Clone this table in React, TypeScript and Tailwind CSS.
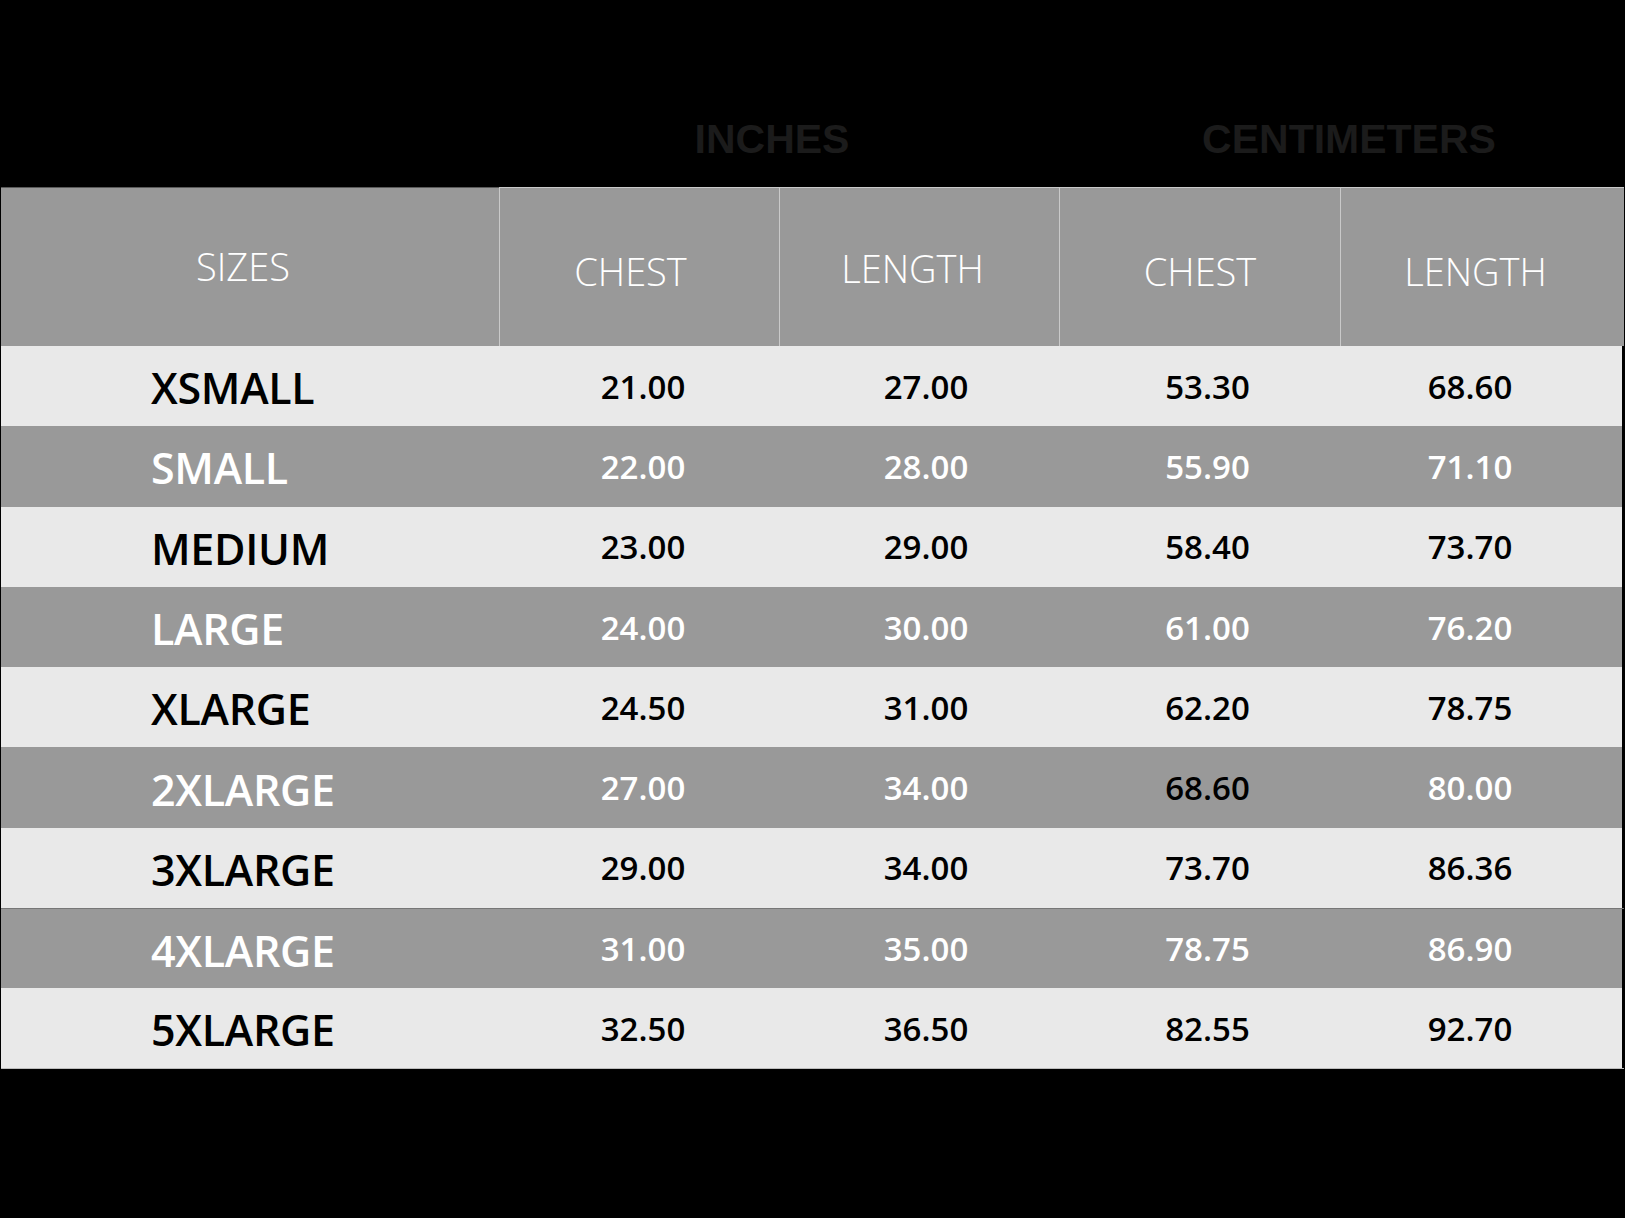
import React from "react";

const rows = [
  ["XSMALL", "21.00", "27.00", "53.30", "68.60"],
  ["SMALL", "22.00", "28.00", "55.90", "71.10"],
  ["MEDIUM", "23.00", "29.00", "58.40", "73.70"],
  ["LARGE", "24.00", "30.00", "61.00", "76.20"],
  ["XLARGE", "24.50", "31.00", "62.20", "78.75"],
  ["2XLARGE", "27.00", "34.00", "68.60", "80.00"],
  ["3XLARGE", "29.00", "34.00", "73.70", "86.36"],
  ["4XLARGE", "31.00", "35.00", "78.75", "86.90"],
  ["5XLARGE", "32.50", "36.50", "82.55", "92.70"],
];

// nudges so the numbers sit where they do in the chart
const numPad = ["pl-[8px]", "pl-[14px]", "pl-[16px]", "pr-[22px]"];
const headPad = ["pr-[18px] pt-[8px]", "pr-[14px] pt-[2px]", "pt-[8px]", "pr-[14px] pt-[8px]"];

const App = () => {
  return (
    <div className="w-[1625px] h-[1218px] bg-black overflow-hidden">
      {/* unit headings */}
      <div
        className="grid grid-cols-[499px_560px_1fr] h-[187px] pt-[119px] text-[41px] leading-none font-bold text-[#1b1b1b]"
        style={{ fontFamily: '"Liberation Sans", Arial, sans-serif' }}
      >
        <div />
        <div className="text-center pr-[14px]">INCHES</div>
        <div className="text-center pl-[14px]">CENTIMETERS</div>
      </div>

      <div
        className="w-[1623px] ml-[1px]"
        style={{ fontFamily: '"Open Sans", "Noto Sans", sans-serif' }}
      >
        {/* header */}
        <div className="grid grid-cols-[498px_280px_280px_281px_1fr] h-[159px] bg-[#999999] text-white text-[38px] font-light leading-none">
          <div className="flex items-center justify-center pr-[14px] pb-[2px] border-t border-[#5a5a5a]">
            SIZES
          </div>
          {["CHEST", "LENGTH", "CHEST", "LENGTH"].map((h, i) => (
            <div
              key={i}
              className={`flex items-center justify-center border-t border-l border-[#c9c9c9] ${headPad[i]}`}
            >
              {h}
            </div>
          ))}
        </div>

        {/* body */}
        {rows.map((r, ri) => {
          const dark = ri % 2 === 1;
          return (
            <div
              key={r[0]}
              className={`grid grid-cols-[498px_280px_280px_281px_1fr] h-[80.3px] ${
                dark ? "bg-[#999999] text-white" : "bg-[#e9e9e9] text-black"
              } ${ri === 7 ? "border-t border-[#777777]" : ""} ${
                ri === rows.length - 1 ? "border-b border-[#bcbcbc]" : ""
              }`}
            >
              <div className="flex items-center pl-[150px] text-[43px] font-semibold tracking-[-0.3px] leading-none pt-[3px]">
                {r[0]}
              </div>
              {r.slice(1).map((v, ci) => (
                <div
                  key={ci}
                  className={`flex items-center justify-center text-[33px] font-semibold leading-none ${numPad[ci]} ${
                    ri === 5 && ci === 2 ? "text-black" : ""
                  } ${ci === 3 ? "border-r-2 border-black" : ""}`}
                >
                  {v}
                </div>
              ))}
            </div>
          );
        })}
      </div>
    </div>
  );
};

export default App;
